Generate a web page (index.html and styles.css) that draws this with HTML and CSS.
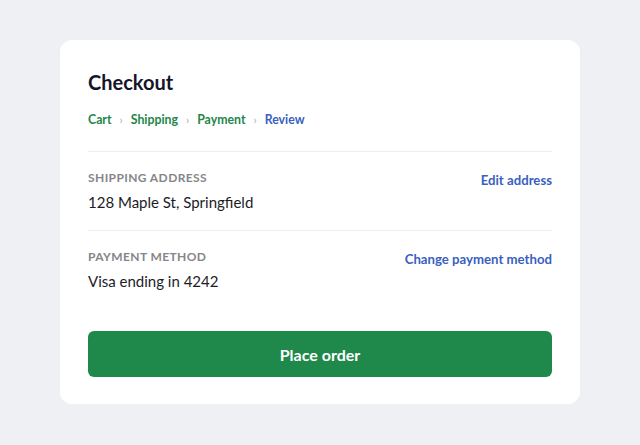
FILE: index.html
```html
<!DOCTYPE html>
<html lang="en">
<head>
    <meta charset="UTF-8">
    <meta name="viewport" content="width=device-width, initial-scale=1.0">
    <title>Checkout</title>
    <link rel="stylesheet" href="styles.css">
</head>
<body>
    <div class="card">
        <h1 class="title">Checkout</h1>
        <nav class="steps">
            <span class="step done">Cart</span>
            <span class="sep">›</span>
            <span class="step done">Shipping</span>
            <span class="sep">›</span>
            <span class="step done">Payment</span>
            <span class="sep">›</span>
            <span class="step current">Review</span>
        </nav>

        <div class="section">
            <div class="info">
                <div class="label">Shipping address</div>
                <div class="value">128 Maple St, Springfield</div>
            </div>
            <a class="link" href="#">Edit address</a>
        </div>

        <div class="section">
            <div class="info">
                <div class="label">Payment method</div>
                <div class="value">Visa ending in 4242</div>
            </div>
            <a class="link" href="#">Change payment method</a>
        </div>

        <button class="place">Place order</button>
    </div>
</body>
</html>
```

FILE: styles.css
```css
* {
    box-sizing: border-box;
    font-family: Lato, "Noto Sans", sans-serif;
}
body {
    margin: 0;
    background: #eef0f4;
    padding: 40px 60px;
}
.card {
    background: #fff;
    border-radius: 12px;
    padding: 27px 28px 28px;
    height: 364px;
}
.title {
    margin: 0;
    font-size: 20px;
    font-weight: 700;
    color: #14142b;
    line-height: 30px;
}
.steps {
    display: flex;
    align-items: center;
    gap: 8px;
    margin-top: 14px;
    padding-bottom: 22px;
    font-size: 12.3px;
    font-weight: 700;
    line-height: 18px;
}
.step.done {
    color: #23864a;
}
.step.current {
    color: #3b5fc0;
}
.sep {
    color: #b8bcc4;
    font-size: 11px;
}
.section {
    display: flex;
    justify-content: space-between;
    align-items: flex-start;
    border-top: 1px solid #eceef1;
    padding: 17px 0 17px;
}
.label {
    font-size: 12px;
    font-weight: 700;
    color: #85858a;
    text-transform: uppercase;
    letter-spacing: 0.4px;
    line-height: 18px;
}
.value {
    margin-top: 4px;
    font-size: 15px;
    color: #1c1c28;
    line-height: 22px;
}
.link {
    margin-top: 3px;
    font-size: 13.2px;
    font-weight: 700;
    color: #3b5fc0;
    text-decoration: none;
}
.place {
    display: block;
    width: 100%;
    height: 46px;
    margin-top: 22px;
    border: none;
    border-radius: 6px;
    background: #1f884b;
    color: #fff;
    font-size: 16px;
    font-weight: 700;
    cursor: pointer;
}
```
